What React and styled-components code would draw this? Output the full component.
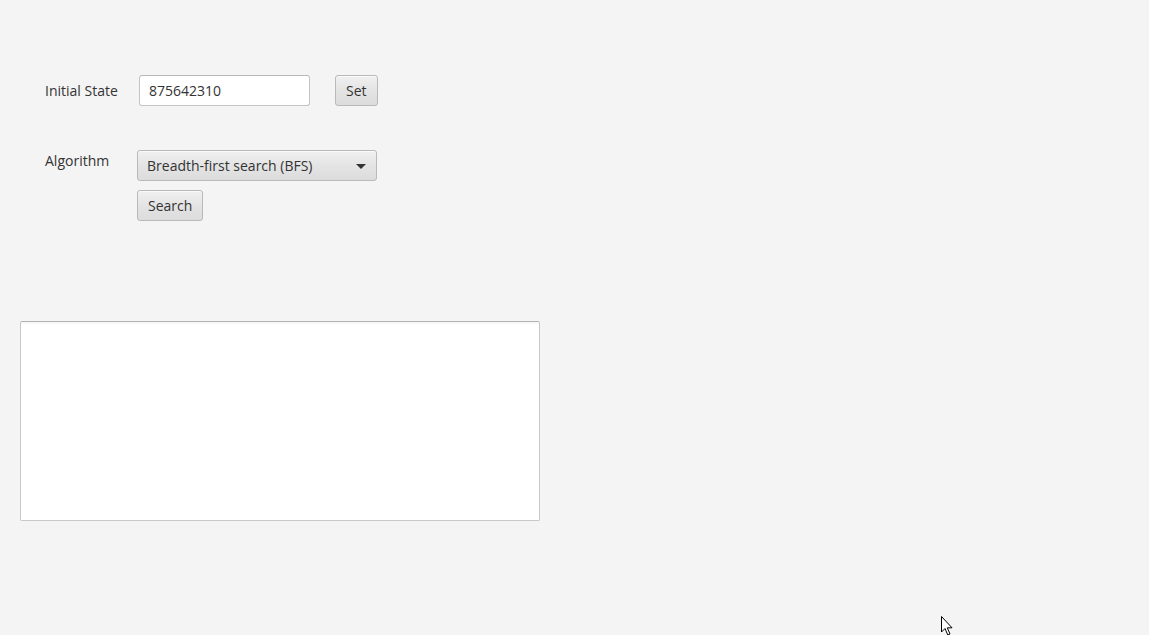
import styled, { createGlobalStyle } from "styled-components";

const GlobalStyle = createGlobalStyle`
  html, body {
    margin: 0;
    padding: 0;
    background: #f4f4f4;
  }
  body {
    font-family: "Open Sans", "Noto Sans", sans-serif;
    font-size: 14px;
    color: #333333;
  }
`;

const App = () => {
  return (
    <Page>
      <GlobalStyle />
      <Form>
        <Row>
          <Label width={94}>Initial State</Label>
          <TextField defaultValue="875642310" />
          <Button style={{ marginLeft: 25 }}>Set</Button>
        </Row>
        <Row top>
          <Label width={92} top>
            Algorithm
          </Label>
          <Column>
            <Combo>
              <span>Breadth-first search (BFS)</span>
              <Arrow />
            </Combo>
            <Button>Search</Button>
          </Column>
        </Row>
      </Form>
      <Output />
      <Cursor width="14" height="21" viewBox="0 0 14 21">
        <path
          d="M0.5 0.5 L0.5 16 L4 12.5 L6.8 19 L9 18 L6.3 11.8 L11 11.8 Z"
          fill="#ffffff"
          stroke="#000000"
          strokeWidth="1"
          strokeLinejoin="miter"
        />
      </Cursor>
    </Page>
  );
};

export default App;

const Page = styled.div`
  position: relative;
  width: 1149px;
  height: 635px;
  box-sizing: border-box;
  padding: 75px 0 0 20px;
  overflow: hidden;
`;

const Form = styled.div`
  padding-left: 25px;
  display: flex;
  flex-direction: column;
  gap: 44px;
`;

const Row = styled.div`
  display: flex;
  align-items: ${(p) => (p.top ? "flex-start" : "center")};
`;

const Label = styled.div`
  width: ${(p) => p.width}px;
  flex-shrink: 0;
  padding-top: ${(p) => (p.top ? "1px" : "0")};
  line-height: 19px;
`;

const TextField = styled.input`
  box-sizing: border-box;
  width: 171px;
  height: 31px;
  padding: 0 9px;
  font: inherit;
  color: #333333;
  background: #ffffff;
  border: 1px solid #c4c4c4;
  border-top-color: #b8b8b8;
  border-radius: 3px;
  outline: none;
`;

const Button = styled.button`
  box-sizing: border-box;
  height: 31px;
  padding: 0 10px;
  font: inherit;
  color: #333333;
  background: linear-gradient(#f0f0f0, #e4e4e4 50%, #dcdcdc);
  border: 1px solid #b9b9b9;
  border-radius: 3px;
  box-shadow: inset 0 1px 0 #fafafa;
  cursor: default;
  align-self: flex-start;
`;

const Column = styled.div`
  display: flex;
  flex-direction: column;
  gap: 9px;
`;

const Combo = styled(Button).attrs({ as: "div" })`
  width: 240px;
  display: flex;
  align-items: center;
  justify-content: space-between;
  padding: 0 10px 0 9px;
`;

const Arrow = styled.span`
  width: 0;
  height: 0;
  border-left: 5px solid transparent;
  border-right: 5px solid transparent;
  border-top: 5px solid #333333;
  margin-top: 1px;
`;

const Output = styled.div`
  margin-top: 100px;
  width: 520px;
  height: 200px;
  box-sizing: border-box;
  background: #ffffff;
  border: 1px solid #c8c8c8;
  border-top-color: #b3b3b3;
  border-radius: 2px;
  box-shadow: inset 0 3px 3px -2px rgba(0, 0, 0, 0.06);
`;

const Cursor = styled.svg`
  position: absolute;
  left: 941px;
  top: 616px;
`;
